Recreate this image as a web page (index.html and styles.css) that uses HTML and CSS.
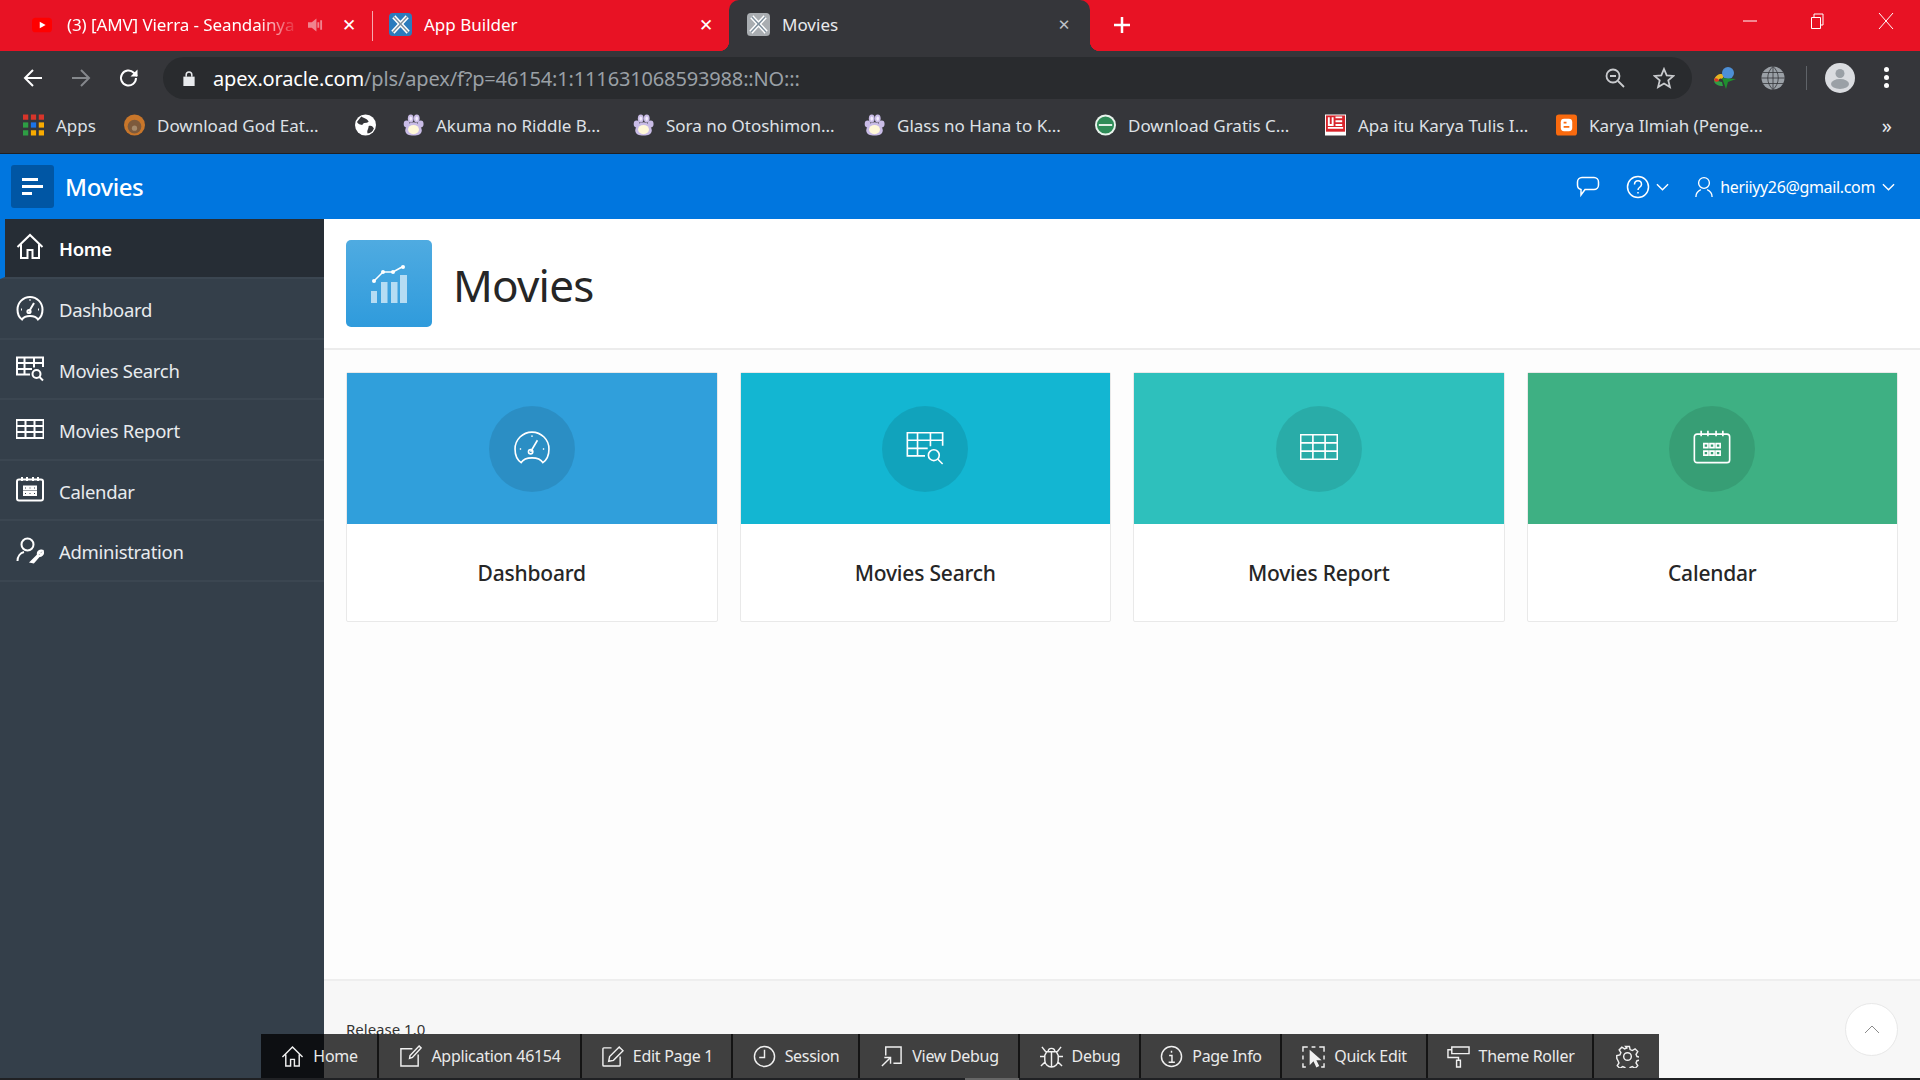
FILE: index.html
```html
<!DOCTYPE html>
<html lang="en">
<head>
    <meta charset="UTF-8">
    <title>Movies</title>
    <link rel="stylesheet" href="styles.css">
</head>
<body>
    <svg class="defs" width="0" height="0">
        <symbol id="i-home" viewBox="0 0 28 28"><path d="M1.500 14 14 2l12.500 12M5 11.500V25h6.500v-8h5v8H23V11.500"/></symbol>
        <symbol id="i-gauge" viewBox="0 0 28 28"><path d="M6 25.500C3 23.500 1.500 20 1.500 15.500a12.500 12.500 0 0 1 25 0c0 4.500-1.500 8-4.500 10-1.500-2.500-4.500-3.500-8-3.500s-6.500 1-8 3.500Z"/><path d="m13 17.500 5-8.500M14 5.500v1M5 15.500h1M22 15.500h1"/><circle cx="13" cy="17.500" r="1.600"/></symbol>
        <symbol id="i-tablesearch" viewBox="0 0 28 28"><path d="M27 13V3.500H1v17h13M1 9h26M1 15h15M8.500 3.500v17M18 3.500v10"/><circle cx="20.500" cy="20" r="4"/><path d="m23.500 23 3.500 3.500"/></symbol>
        <symbol id="i-table" viewBox="0 0 28 28"><path d="M.5 5h27v18H.5zM.5 11h27M.5 17h27M9.500 5v18M18.500 5v18"/></symbol>
        <symbol id="i-calendar" viewBox="0 0 28 28"><rect x="1" y="4.500" width="26" height="21" rx="2"/><path d="M6 2v4M11 2v4M17 2v4M22 2v4M8 11.500h3v3H8zM12.500 11.500h3v3h-3zM17 11.500h3v3h-3zM8 17h3v3H8zM12.500 17h3v3h-3zM17 17h3v3h-3z"/></symbol>
        <symbol id="i-admin" viewBox="0 0 28 28"><circle cx="11.500" cy="8.500" r="6"/><path d="M1.500 25c0-4.500 3-8 6.500-9M15 26l7-7c-.8-2.500 1-5 3.500-4.500L23 17l2 1.500 2-2.500c.5 2.500-2 4.500-4 4l-5.500 6.500Z"/></symbol>
        <symbol id="i-paw" viewBox="0 0 22 24"><path d="M11 9c5 0 9 5 9 9 0 4-4 5.500-9 5.500S2 22 2 18c0-4 4-9 9-9Z" fill="#c9bce6"/><ellipse cx="3.500" cy="11" rx="3.200" ry="3.800" fill="#c9bce6"/><ellipse cx="8" cy="5" rx="3.200" ry="4.500" fill="#c9bce6"/><ellipse cx="14.500" cy="5" rx="3.200" ry="4.500" fill="#c9bce6"/><ellipse cx="18.800" cy="11" rx="3.200" ry="3.800" fill="#c9bce6"/><ellipse cx="11" cy="17" rx="6" ry="5" fill="#fff8d8"/><ellipse cx="8" cy="5" rx="1.400" ry="2.400" fill="#f2ecfb"/><ellipse cx="14.500" cy="5" rx="1.400" ry="2.400" fill="#f2ecfb"/></symbol>
        <symbol id="i-apex" viewBox="0 0 24 24"><rect width="24" height="24" rx="4"/><path d="M5 4l15 16M19 4 4 20" fill="none" stroke="#fff" stroke-width="4.500"/><path d="M5 4l15 16M19 4 4 20" class="apex-inner"/></symbol>
    </svg>

    <div class="tabstrip">
        <div class="tab">
            <svg class="favicon yt" viewBox="0 0 22 16"><rect width="22" height="16" rx="4" fill="#f00"/><path d="M8.500 4.500 15 8l-6.500 3.500z" fill="#fff"/></svg>
            <span class="tab-title fade">(3) [AMV] Vierra - Seandainya</span>
            <svg class="speaker" viewBox="0 0 16 14"><path d="M0 4h4l5-4v14l-5-4H0z" fill="#f0838e"/><path d="M11 4v6M14 2v10" stroke="#f0838e" stroke-width="2"/></svg>
            <span class="tab-close">✕</span>
        </div>
        <div class="tab tab-split">
            <svg class="favicon apex-blue"><use href="#i-apex"/></svg>
            <span class="tab-title">App Builder</span>
            <span class="tab-close">✕</span>
        </div>
        <div class="tab tab-active">
            <svg class="favicon apex-grey"><use href="#i-apex"/></svg>
            <span class="tab-title">Movies</span>
            <span class="tab-close grey">✕</span>
        </div>
        <svg class="newtab" viewBox="0 0 18 18"><path d="M9 1v16M1 9h16"/></svg>
        <div class="winctl">
            <svg viewBox="0 0 16 16"><path d="M1 8h14"/></svg>
            <svg viewBox="0 0 16 16"><path d="M3.500 4.500h9v11h-9zM6 4.500V1h9v11h-2.500"/></svg>
            <svg viewBox="0 0 16 16"><path d="m1 0 14 16M15 0 1 16"/></svg>
        </div>
    </div>

    <div class="toolbar">
        <svg class="tb-icon" viewBox="0 0 20 20"><path d="M19 10H2M10 2l-8 8 8 8"/></svg>
        <svg class="tb-icon dim" viewBox="0 0 20 20"><path d="M1 10h17M10 2l8 8-8 8"/></svg>
        <svg class="tb-icon" viewBox="0 0 20 20"><path d="M17 10a7.500 7.500 0 1 1-2.200-5.300L18 8"/><path d="M18.500 1.500v7h-7" fill="#fff" stroke="none"/></svg>
        <div class="omnibox">
            <svg class="lock" viewBox="0 0 12 16"><path d="M0 6h12v10H0z" fill="#e8eaed"/><path d="M3 6V4a3 3 0 0 1 6 0v2" fill="none" stroke="#e8eaed" stroke-width="1.600"/></svg>
            <span class="url"><b>apex.oracle.com</b>/pls/apex/f?p=46154:1:111631068593988::NO:::</span>
            <svg class="zoomout" viewBox="0 0 20 20"><circle cx="8" cy="8" r="6.500"/><path d="M5 8h6M13 13l6 6"/></svg>
            <svg class="star" viewBox="0 0 22 22"><path d="m11 2 2.700 6.300 6.800.6-5.200 4.500 1.600 6.700L11 16.500l-5.900 3.600 1.600-6.700L1.500 8.900l6.800-.6z"/></svg>
        </div>
        <svg class="ext" viewBox="0 0 24 24"><path d="M1 14c2-6 7-7 11-5l-3 4c-2-1-3 0-4 2z" fill="#e6b422"/><path d="M1 14c0 4 4 6 9 6l-1-4c-2 0-3-1-4-1z" fill="#2e9e44"/><path d="M1 14c1-2 2-2 4-1l1 2-3 1z" fill="#d8352a"/><circle cx="15" cy="7" r="6" fill="#4d8fd6"/><path d="m9 12 14 1-8 3-2 7z" fill="#1f8f2f"/></svg>
        <svg class="ext-globe" viewBox="0 0 24 24"><circle cx="12" cy="12" r="11.500" fill="#9aa0a6"/><path d="M12 .5v23M.5 12h23M2 6.500h20M2 17.500h20M12 .5c-7 6-7 17 0 23M12 .5c7 6 7 17 0 23" fill="none" stroke="#35363a" stroke-width=".8"/></svg>
        <span class="tb-sep"></span>
        <svg class="avatar" viewBox="0 0 30 30"><circle cx="15" cy="15" r="15" fill="#dadce0"/><circle cx="15" cy="10.500" r="4.500" fill="#9aa0a6"/><ellipse cx="15" cy="21" rx="9" ry="5" fill="#9aa0a6"/></svg>
        <span class="dots"><i></i><i></i><i></i></span>
    </div>

    <div class="bookmarks">
        <span class="bm bm-apps">
            <svg class="bm-icon" viewBox="0 0 20 20"><path d="M0 0h5v5H0z" fill="#d8352a"/><path d="M7.500 0h5v5h-5z" fill="#d8352a"/><path d="M15 0h5v5h-5z" fill="#d8352a"/><path d="M0 7.500h5v5H0z" fill="#2e9e44"/><path d="M7.500 7.500h5v5h-5z" fill="#1a73e8"/><path d="M15 7.500h5v5h-5z" fill="#f9ab00"/><path d="M0 15h5v5H0z" fill="#2e9e44"/><path d="M7.500 15h5v5h-5z" fill="#f9ab00"/><path d="M15 15h5v5h-5z" fill="#f9ab00"/></svg>Apps
        </span>
        <span class="bm bm-god">
            <svg class="bm-icon" viewBox="0 0 20 20"><circle cx="10" cy="10" r="10" fill="#c8762a"/><circle cx="10" cy="11.500" r="6.500" fill="#7d5a3c"/><circle cx="10" cy="13" r="2.500" fill="#a58a6c"/></svg>Download God Eat...
        </span>
        <span class="bm bm-earth">
            <svg class="bm-icon" viewBox="0 0 20 20"><circle cx="10" cy="10" r="10" fill="#fff"/><path d="M6 2c3 2 6 2 7 5-2 2-5 0-6 3-3 0-5-2-5-3zM13 11c3-1 4 1 5 2-1 3-3 5-6 5-1-3 1-4 1-7z" fill="#35363a"/></svg>
        </span>
        <span class="bm bm-akuma"><svg class="bm-icon"><use href="#i-paw"/></svg>Akuma no Riddle B...</span>
        <span class="bm bm-sora"><svg class="bm-icon"><use href="#i-paw"/></svg>Sora no Otoshimon...</span>
        <span class="bm bm-glass"><svg class="bm-icon"><use href="#i-paw"/></svg>Glass no Hana to K...</span>
        <span class="bm bm-gratis">
            <svg class="bm-icon" viewBox="0 0 22 22"><circle cx="11" cy="11" r="11" fill="#e8f3ec"/><circle cx="11" cy="11" r="9" fill="#2e8b57"/><path d="M4 11h14" stroke="#e8f3ec" stroke-width="2"/></svg>Download Gratis C...
        </span>
        <span class="bm bm-apa">
            <svg class="bm-icon" viewBox="0 0 22 22"><path d="M0 0h22v22H0z" fill="#fff"/><path d="M1 1h20v17H1z" fill="#d8232a"/><path d="M4 3v8h4V3M11 3h7M11 7h7M11 11h7M3 14h16" fill="none" stroke="#fff" stroke-width="2"/></svg>Apa itu Karya Tulis I...
        </span>
        <span class="bm bm-blog">
            <svg class="bm-icon" viewBox="0 0 22 22"><rect width="22" height="22" rx="3" fill="#f96a0e"/><rect x="5" y="4.500" width="12" height="13" rx="3.500" fill="#fff"/><path d="M8 8.500h3M8 13h6" stroke="#f96a0e" stroke-width="1.800"/></svg>Karya Ilmiah (Penge...
        </span>
        <span class="bm-more">»</span>
    </div>

    <header class="apex-header">
        <span class="menu-btn"><i></i><i></i><i></i></span>
        <span class="app-name">Movies</span>
        <svg class="hdr-chat" viewBox="0 0 24 22"><path d="M6 1.500h12c2.500 0 4.500 2 4.500 4.500v3c0 2.500-2 4.500-4.500 4.500H9L5 19v-5.500C3 13 1.500 11 1.500 9V6c0-2.500 2-4.500 4.500-4.500Z"/></svg>
        <svg class="hdr-help" viewBox="0 0 24 24"><circle cx="12" cy="12" r="10.500"/><path d="M8.500 9.500c0-5 7-5 7 0 0 3-3.500 2.500-3.500 5.500M12 17v1.500"/></svg>
        <svg class="hdr-chev" viewBox="0 0 14 8"><path d="m1 1 6 6 6-6"/></svg>
        <svg class="hdr-user" viewBox="0 0 20 24"><circle cx="10" cy="7.500" r="6"/><path d="M1 23c0-3 1-6 5.500-8M19 23c0-3-1-6-5.500-8"/></svg>
        <span class="user-email">heriiyy26@gmail.com</span>
        <svg class="hdr-chev last" viewBox="0 0 14 8"><path d="m1 1 6 6 6-6"/></svg>
    </header>

    <div class="main">
        <nav class="sidebar">
            <a class="nav-item active"><svg class="nav-icon"><use href="#i-home"/></svg>Home</a>
            <a class="nav-item"><svg class="nav-icon"><use href="#i-gauge"/></svg>Dashboard</a>
            <a class="nav-item"><svg class="nav-icon"><use href="#i-tablesearch"/></svg>Movies Search</a>
            <a class="nav-item"><svg class="nav-icon"><use href="#i-table"/></svg>Movies Report</a>
            <a class="nav-item"><svg class="nav-icon"><use href="#i-calendar"/></svg>Calendar</a>
            <a class="nav-item"><svg class="nav-icon"><use href="#i-admin"/></svg>Administration</a>
        </nav>

        <div class="content">
            <div class="hero">
                <div class="hero-tile">
                    <svg viewBox="0 0 36 38" width="36" height="38">
                        <path d="M0 26h6v12H0zM10 17h6.500v21H10zM20 17h6.500v21H20zM29 10h7v28h-7z" fill="#b5dcf3"/>
                        <path d="m3 16 9-9h10l9-5" fill="none" stroke="#fff" stroke-width="1.500"/>
                        <circle cx="3" cy="16" r="2" fill="#fff"/><circle cx="12" cy="7" r="2" fill="#fff"/><circle cx="22" cy="7" r="2" fill="#fff"/><circle cx="32" cy="2" r="2" fill="#fff"/>
                    </svg>
                </div>
                <h1>Movies</h1>
            </div>

            <div class="cards">
                <a class="card">
                    <div class="card-top c-blue"><span class="card-circle"><svg><use href="#i-gauge"/></svg></span></div>
                    <div class="card-label">Dashboard</div>
                </a>
                <a class="card">
                    <div class="card-top c-cyan"><span class="card-circle"><svg><use href="#i-tablesearch"/></svg></span></div>
                    <div class="card-label">Movies Search</div>
                </a>
                <a class="card">
                    <div class="card-top c-teal"><span class="card-circle"><svg><use href="#i-table"/></svg></span></div>
                    <div class="card-label">Movies Report</div>
                </a>
                <a class="card">
                    <div class="card-top c-green"><span class="card-circle"><svg><use href="#i-calendar"/></svg></span></div>
                    <div class="card-label">Calendar</div>
                </a>
            </div>

            <footer class="page-footer">Release 1.0</footer>
        </div>
    </div>

    <div class="taskbar"><span class="task-light"></span></div>

    <a class="to-top"><svg viewBox="0 0 16 9"><path d="m1 8 7-7 7 7"/></svg></a>

    <div class="devbar">
        <a class="dev-item"><svg viewBox="0 0 24 24"><path d="M1.500 12.500 12 2l10.500 10.500M5 10v12h5v-7h4v7h5V10"/></svg>Home</a>
        <a class="dev-item"><svg viewBox="0 0 24 24"><path d="M14 4H2v18h18V10M11 14l3-1 9-10-2-2-9.500 10z"/></svg>Application 46154</a>
        <a class="dev-item"><svg viewBox="0 0 24 24"><path d="M11 3H3a1 1 0 0 0-1 1v17a1 1 0 0 0 1 1h16a1 1 0 0 0 1-1v-9M8 17l1-5L19 2l4 4-10 10z"/></svg>Edit Page 1</a>
        <a class="dev-item"><svg viewBox="0 0 24 24"><circle cx="12" cy="12" r="10.500"/><path d="M12 5v8H6.500"/></svg>Session</a>
        <a class="dev-item"><svg viewBox="0 0 24 24"><path d="M6 11V2h16v17h-8M2 22l9-9M4.500 13H11v6.500"/></svg>View Debug</a>
        <a class="dev-item"><svg viewBox="0 0 24 24"><path d="M7 7h10l2 4v5a7 7 0 0 1-14 0v-5zM8.500 7a3.500 3.500 0 0 1 7 0M2 2l4 5M22 2l-4 5M0 12h5M24 12h-5M1 22l4-4M23 22l-4-4M12 7v16"/></svg>Debug</a>
        <a class="dev-item"><svg viewBox="0 0 24 24"><circle cx="12" cy="12" r="10.500"/><path d="M12 6v2M9.500 11H12.500v7M9 18h6.500"/></svg>Page Info</a>
        <a class="dev-item"><svg viewBox="0 0 24 24"><path d="M1 7V2h5M10 2h4M18 2h5v5M23 11v4M1 11v4M1 19v4h3M20 23h3v-4"/><path d="M8 5v16l4-4 3 6.500 3-1.500-3-6h5.500z" class="solid"/></svg>Quick Edit</a>
        <a class="dev-item"><svg viewBox="0 0 24 24"><path d="M5 2h18v7H5zM5 5H1v8h11v3M10 16h4v7h-4z"/></svg>Theme Roller</a>
        <a class="dev-item"><svg viewBox="0 0 24 24"><circle cx="12" cy="12" r="4"/><path d="M10 1.500h4l.7 3.300 2.300 1 2.900-1.800 2.800 2.800-1.800 2.900 1 2.300 3.300.7v3l-3.300.7-1 2.300 1.800 2.900-2.800 2.800-2.900-1.800-2.300 1-.7 3.300h-4l-.7-3.300-2.300-1-2.900 1.800-2.800-2.800 1.800-2.900-1-2.300L.8 14v-3l3.300-.7 1-2.300-1.800-2.900 2.800-2.800 2.900 1.800 2.300-1z"/></svg></a>
    </div>
</body>
</html>
```

FILE: styles.css
```css
* {
    box-sizing: border-box;
}

body {
    margin: 0;
    height: 1080px;
    overflow: hidden;
    display: flex;
    flex-direction: column;
    font-family: "Noto Sans", "Open Sans", sans-serif;
    background-color: #fff;
}

.defs {
    position: absolute;
}

svg {
    display: block;
    flex: none;
}

/* browser tabs */
.tabstrip {
    height: 51px;
    flex: none;
    display: flex;
    align-items: center;
    padding-left: 15px;
    background-color: #e81224;
    color: #fff;
    font-size: 17px;
}

.tab {
    width: 357px;
    height: 51px;
    display: flex;
    align-items: center;
    padding: 0 14px 2px 17px;
    position: relative;
}

.tab-split::before {
    content: "";
    position: absolute;
    left: 0;
    top: 11px;
    width: 1px;
    height: 30px;
    background-color: #f6a9b0;
}

.tab-active {
    width: 361px;
    padding: 0 17px 2px 18px;
    background-color: #35363a;
    border-radius: 10px 10px 0 0;
    color: #e8eaed;
}

/* little flares at the foot of the open tab */
.tab-active::before,
.tab-active::after {
    content: "";
    position: absolute;
    bottom: 0;
    width: 10px;
    height: 10px;
}

.tab-active::before {
    left: -10px;
    background-image: radial-gradient(circle at 0 0, transparent 10px, #35363a 10.500px);
}

.tab-active::after {
    right: -10px;
    background-image: radial-gradient(circle at 100% 0, transparent 10px, #35363a 10.500px);
}

.favicon {
    width: 23px;
    height: 23px;
    margin-right: 12px;
}

.favicon.yt {
    width: 20px;
    height: 16px;
    margin-right: 15px;
}

.apex-blue {
    fill: #2b7bbd;
}

.apex-grey {
    fill: #a9adb1;
}

.apex-inner {
    fill: none;
    stroke: #7f8f9c;
    stroke-width: 1.500;
}

.tab-title {
    flex: 1;
    overflow: hidden;
    white-space: nowrap;
}

.fade {
    letter-spacing: -0.1px;
    -webkit-mask-image: linear-gradient(to right, #000 82%, transparent 100%);
    mask-image: linear-gradient(to right, #000 82%, transparent 100%);
}

.speaker {
    width: 15px;
    height: 14px;
    margin: 0 17px 0 8px;
}

.tab-close {
    width: 18px;
    font-size: 17px;
    font-family: "DejaVu Sans", sans-serif;
    font-weight: bold;
    text-align: center;
}

.tab-close.grey {
    color: #bdc1c6;
    font-size: 15px;
    font-weight: normal;
}

.newtab {
    width: 18px;
    height: 18px;
    margin: -2px 0 0 23px;
    fill: none;
    stroke: #fff;
    stroke-width: 2.500;
}

.winctl {
    margin-left: auto;
    display: flex;
    align-items: center;
    gap: 52px;
    padding-right: 26px;
    margin-top: -10px;
}

.winctl svg {
    width: 16px;
    height: 16px;
    fill: none;
    stroke: #fff;
    stroke-width: 1;
}

.winctl svg:nth-child(2) {
    margin: 0 2px 0 -2px;
}

/* address bar */
.toolbar {
    height: 50px;
    flex: none;
    display: flex;
    align-items: center;
    padding: 3px 0 0 23px;
    background-color: #35363a;
}

.tb-icon {
    width: 20px;
    height: 20px;
    margin-right: 28px;
    fill: none;
    stroke: #fff;
    stroke-width: 2;
}

.tb-icon.dim {
    stroke: #85888c;
}

.omnibox {
    width: 1529px;
    height: 42px;
    margin: 1px 0 0 -4px;
    display: flex;
    align-items: center;
    padding-left: 20px;
    border-radius: 21px;
    background-color: #292b2e;
    color: #9aa0a6;
    font-size: 20px;
}

.lock {
    width: 12px;
    height: 15px;
    margin-right: 18px;
}

.url {
    flex: 1;
    letter-spacing: -0.15px;
    white-space: nowrap;
}

.url b {
    font-weight: normal;
    color: #fff;
}

.zoomout {
    width: 20px;
    height: 20px;
    margin-right: 28px;
    fill: none;
    stroke: #c9cbce;
    stroke-width: 1.800;
}

.star {
    width: 22px;
    height: 22px;
    margin-right: 17px;
    fill: none;
    stroke: #c9cbce;
    stroke-width: 1.800;
}

.ext {
    width: 24px;
    height: 24px;
    margin-left: 21px;
}

.ext-globe {
    width: 24px;
    height: 24px;
    margin-left: 24px;
}

.tb-sep {
    width: 1px;
    height: 24px;
    margin-left: 21px;
    background-color: #5f6368;
}

.avatar {
    width: 30px;
    height: 30px;
    margin-left: 18px;
}

.dots {
    margin-left: 29px;
    display: flex;
    flex-direction: column;
    gap: 3px;
}

.dots i {
    width: 5px;
    height: 5px;
    border-radius: 50%;
    background-color: #fff;
}

/* bookmarks */
.bookmarks {
    height: 53px;
    flex: none;
    border-bottom: 1px solid #1f2023;
    background-color: #35363a;
    color: #dee1e6;
    font-size: 17px;
    display: flex;
    align-items: center;
    padding: 0 0 4px 23px;
}

.bm {
    display: flex;
    align-items: center;
    white-space: nowrap;
}

.bm-icon {
    width: 21px;
    height: 22px;
    margin-right: 12px;
}

.bm-apps {
    width: 101px;
}

.bm-god {
    width: 231px;
}

.bm-earth {
    width: 48px;
}

.bm-akuma {
    width: 230px;
}

.bm-sora {
    width: 231px;
}

.bm-glass {
    width: 231px;
}

.bm-gratis {
    width: 230px;
}

.bm-apa {
    width: 231px;
}

.bm-more {
    margin-left: auto;
    padding-right: 28px;
    font-size: 20px;
    color: #e8eaed;
}

/* apex header */
.apex-header {
    height: 65px;
    flex: none;
    display: flex;
    align-items: center;
    padding: 0 25px 0 11px;
    background-color: #0076df;
    color: #fff;
}

.menu-btn {
    width: 43px;
    height: 43px;
    display: flex;
    flex-direction: column;
    justify-content: center;
    gap: 4.500px;
    padding-left: 11px;
    border-radius: 3px;
    background-color: #0056a4;
}

.menu-btn i {
    height: 2.500px;
    width: 16px;
    background-color: #fff;
}

.menu-btn i:nth-child(2) {
    width: 21px;
}

.menu-btn i:nth-child(3) {
    width: 10px;
}

.app-name {
    margin-left: 11px;
    flex: 1;
    font-size: 24px;
    font-weight: 500;
    letter-spacing: -0.4px;
}

.apex-header svg {
    fill: none;
    stroke: #fff;
    stroke-width: 1.500;
}

.hdr-chat {
    width: 24px;
    height: 22px;
    margin-right: 26px;
}

.hdr-help {
    width: 24px;
    height: 24px;
    margin-right: 6px;
}

.hdr-chev {
    width: 13px;
    height: 8px;
    margin-right: 26px;
}

.hdr-chev.last {
    margin: 0 0 0 7px;
}

.hdr-user {
    width: 18px;
    height: 22px;
    margin-right: 7px;
}

.user-email {
    font-size: 16px;
    letter-spacing: -0.35px;
}

/* page */
.main {
    flex: 1;
    display: flex;
    min-height: 0;
}

.sidebar {
    width: 324px;
    flex: none;
    background-color: #343f4a;
    color: #e8ebee;
    font-size: 18.500px;
}

.nav-item {
    height: 60.500px;
    display: flex;
    align-items: center;
    gap: 15px;
    padding: 3px 0 0 16px;
    border-bottom: 2px solid #3b4651;
    letter-spacing: -0.3px;
}

.nav-item.active {
    height: 60px;
    padding: 1px 0 0 11px;
    border-left: 5px solid #0076df;
    background-color: #262d35;
    color: #fff;
    font-weight: 600;
}

.nav-icon {
    width: 28px;
    height: 28px;
    margin-top: -4px;
    fill: none;
    stroke: #fff;
    stroke-width: 2;
}

.content {
    flex: 1;
    min-width: 0;
    display: flex;
    flex-direction: column;
    background-color: #fdfdfd;
}

.hero {
    height: 131px;
    flex: none;
    display: flex;
    align-items: center;
    gap: 21px;
    padding: 22px;
    border-bottom: 2px solid #ececec;
    background-color: #fff;
}

.hero-tile {
    width: 86px;
    height: 87px;
    flex: none;
    display: flex;
    align-items: center;
    justify-content: center;
    border-radius: 5px;
    background-image: linear-gradient(to bottom, #4fabe1, #2f9bdc);
}

h1 {
    margin: 2px 0 0;
    font-size: 44px;
    font-weight: 400;
    letter-spacing: -0.8px;
    color: #262626;
}

.cards {
    flex: 1;
    display: grid;
    grid-template-columns: repeat(4, 1fr);
    grid-template-rows: 250px;
    gap: 22px;
    padding: 22px 22px 0;
}

.card {
    display: flex;
    flex-direction: column;
    border: 1px solid #e9e9e9;
    border-radius: 2px;
    background-color: #fff;
}

.card-top {
    height: 151px;
    flex: none;
    display: flex;
    align-items: center;
    justify-content: center;
}

.c-blue {
    background-color: #309fdb;
}

.c-cyan {
    background-color: #13b6d2;
}

.c-teal {
    background-color: #2ec0bc;
}

.c-green {
    background-color: #3eb083;
}

.card-circle {
    width: 86px;
    height: 86px;
    display: flex;
    align-items: center;
    justify-content: center;
    border-radius: 50%;
    background-color: rgba(0, 0, 0, 0.1);
}

.card-circle svg {
    width: 38px;
    height: 38px;
    margin-top: -3px;
    fill: none;
    stroke: #fff;
    stroke-width: 1.200;
}

.card-label {
    flex: 1;
    display: flex;
    align-items: center;
    justify-content: center;
    padding-top: 1px;
    font-size: 21px;
    font-weight: 500;
    letter-spacing: -0.2px;
    color: #262626;
}

.page-footer {
    height: 99px;
    flex: none;
    padding: 38px 22px 0;
    border-top: 2px solid #eee;
    background-color: #f7f7f7;
    font-size: 15px;
    color: #333;
}

.taskbar {
    height: 2px;
    flex: none;
    position: relative;
    background-color: #202124;
}

.task-light {
    position: absolute;
    left: 965px;
    width: 54px;
    height: 2px;
    background-color: #666;
}

.to-top {
    position: absolute;
    left: 1845px;
    top: 1003px;
    width: 53px;
    height: 53px;
    display: flex;
    align-items: center;
    justify-content: center;
    border: 1px solid #e8e8e8;
    border-radius: 50%;
    background-color: #fff;
}

.to-top svg {
    width: 16px;
    height: 9px;
    fill: none;
    stroke: #8a8a8a;
    stroke-width: 1;
}

/* developer toolbar */
.devbar {
    position: absolute;
    left: 261px;
    top: 1034px;
    height: 44px;
    display: grid;
    grid-template-columns: 118px 203px 151px 127px 160px 121px 141px 146px 166px 65px;
    background-image: linear-gradient(to right, #0d0f12 63px, #404040 63px);
    color: #eaeaea;
    font-size: 16px;
}

.dev-item {
    display: flex;
    align-items: center;
    justify-content: center;
    gap: 9px;
    padding-left: 1px;
    border-right: 2px solid #141414;
    white-space: nowrap;
    letter-spacing: -0.3px;
}

.dev-item:last-child {
    border-right: none;
}

.dev-item svg {
    width: 23px;
    height: 23px;
    fill: none;
    stroke: #f0f0f0;
    stroke-width: 1.500;
}

.dev-item .solid {
    fill: #f0f0f0;
    stroke: none;
}
```
